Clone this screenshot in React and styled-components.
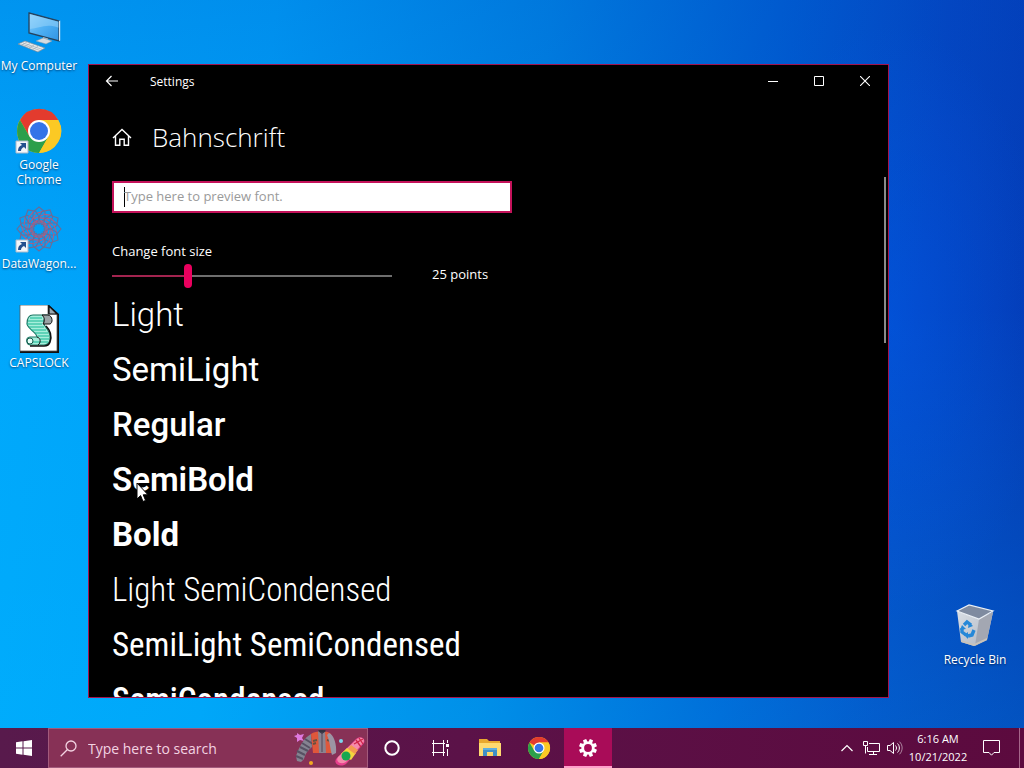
import React, { useState } from "react";
import styled, { createGlobalStyle } from "styled-components";

const ui = '"Open Sans", "Noto Sans", sans-serif';
const preview = 'Roboto, "Open Sans", sans-serif';
const previewCondensed = '"Roboto Condensed", Roboto, sans-serif';

const GlobalStyle = createGlobalStyle`
  *, *::before, *::after { box-sizing: border-box; }
  body { margin: 0; font-family: ${ui}; color: #fff; overflow: hidden; }
  button { border: 0; padding: 0; background: none; color: inherit; font: inherit; }
  svg { display: block; flex: none; }
`;

const Screen = styled.div`
  display: flex;
  flex-direction: column;
  height: 100vh;
  background:
    radial-gradient(ellipse 160px 300px at 87% 42%, rgba(0, 92, 240, 0.4), transparent),
    linear-gradient(180deg, rgba(0, 70, 190, 0.2), transparent 40%, rgba(0, 200, 255, 0.2)),
    linear-gradient(96deg, #00a8fc 0%, #00a0f8 25%, #0084e4 50%, #005dd2 72%, #0446c2 86%, #0338b2 100%);
`;

const Desktop = styled.main`
  flex: 1;
  min-height: 0;
  display: grid;
  grid-template-columns: 88px minmax(0, 1fr) 135px;
`;

const IconColumn = styled.div`
  display: flex;
  flex-direction: column;
  justify-content: ${(p) => (p.$end ? "flex-end" : "flex-start")};
  align-items: ${(p) => (p.$end ? "flex-end" : "flex-start")};
  padding: ${(p) => (p.$end ? "0 0 27px" : "8px 0 0")};
`;

const Shortcut = styled.button`
  width: ${(p) => p.$width || 78}px;
  height: 99px;
  display: flex;
  flex-direction: column;
  align-items: center;
  gap: 2px;
  font-size: 12px;
  line-height: 15px;
  white-space: nowrap;
  text-shadow: 0 1px 2px rgba(0, 20, 60, 0.7);
`;

const Window = styled.section`
  margin: 64px 0 30px;
  min-height: 0;
  display: flex;
  flex-direction: column;
  background: #000;
  border: 1px solid #a3134f;
  overflow: hidden;
`;

const TitleBar = styled.header`
  display: flex;
  align-items: center;
  height: 32px;
  flex: none;
  font-size: 12px;
`;

const TitleButton = styled.button`
  width: 46px;
  height: 32px;
  display: grid;
  place-items: center;
`;

const WindowName = styled.span`
  flex: 1;
  padding-left: 15px;
`;

const PageHeader = styled.div`
  display: flex;
  align-items: center;
  gap: 20px;
  height: 80px;
  flex: none;
  padding-left: 23px;
`;

const PageTitle = styled.h1`
  margin: 0;
  font-size: 26px;
  font-weight: 300;
  line-height: 36px;
`;

const Body = styled.div`
  flex: 1;
  min-height: 0;
  display: flex;
`;

const Content = styled.div`
  flex: 1;
  min-width: 0;
  overflow: hidden;
  padding: 4px 23px 0;
`;

const ScrollThumb = styled.div`
  width: 2px;
  height: 32%;
  margin-right: 2px;
  background: #8a8a8a;
`;

const PreviewInput = styled.input`
  display: block;
  width: 100%;
  max-width: 400px;
  height: 32px;
  padding: 0 10px 2px;
  border: 2px solid #c4125a;
  border-radius: 0;
  outline: 0;
  background: linear-gradient(#000, #000) 10px center / 1px 20px no-repeat #fff;
  color: #000;
  font: 13px ${ui};
  &::placeholder { color: #9a9a9a; opacity: 1; }
`;

const SizeLabel = styled.label`
  display: block;
  margin-top: 28px;
  font-size: 13px;
  line-height: 20px;
`;

const SliderRow = styled.div`
  display: flex;
  align-items: center;
  gap: 40px;
  height: 24px;
  margin: 3px 0 1px;
  font-size: 13px;
`;

const Slider = styled.input`
  appearance: none;
  width: 280px;
  height: 24px;
  margin: 0;
  background: linear-gradient(90deg, #a3244f 27%, #6e6e6e 27%) center / 100% 2px no-repeat;
  &::-webkit-slider-thumb {
    appearance: none;
    width: 8px;
    height: 24px;
    border-radius: 4px;
    background: #ea005e;
  }
`;

const SizeValue = styled.output`
  line-height: 20px;
  padding-bottom: 4px;
`;

const FaceList = styled.ul`
  margin: 0;
  padding: 0;
  list-style: none;
  display: flex;
  flex-direction: column;
  gap: 4px;
  font-family: ${preview};
`;

const Face = styled.li`
  font-size: 33px;
  line-height: 51px;
  font-family: ${(p) => (p.$condensed ? previewCondensed : preview)};
  font-weight: ${(p) => p.$weight};
  white-space: nowrap;
`;

const Pointer = styled.svg`
  position: absolute;
  left: 136px;
  top: 482px;
  pointer-events: none;
`;

const Taskbar = styled.footer`
  display: flex;
  height: 40px;
  flex: none;
  background: linear-gradient(90deg, #581a4c, #5b1248 45%, #5c0a3e);
`;

const StartButton = styled.button`
  width: 48px;
  display: grid;
  place-items: center;
`;

const SearchBox = styled.label`
  width: 320px;
  display: flex;
  align-items: center;
  gap: 11px;
  padding: 0 2px 0 11px;
  background: #873156;
  border: 1px solid #a35a7c;
`;

const SearchInput = styled.input`
  flex: 1;
  min-width: 0;
  border: 0;
  padding: 0;
  outline: 0;
  background: none;
  color: #f3d3e2;
  font: 14px ${ui};
  &::placeholder { color: #f3d3e2; opacity: 1; }
`;

const Apps = styled.nav`
  display: flex;
  gap: 1px;
  flex: 1;
`;

const AppButton = styled.button`
  width: 48px;
  display: grid;
  place-items: center;
  background: ${(p) => (p.$active ? "#a90c58" : "none")};
  box-shadow: ${(p) => (p.$active ? "inset 0 -2px #ff9fcb" : "none")};
`;

const Tray = styled.div`
  display: flex;
`;

const TrayButton = styled.button`
  width: ${(p) => p.$width || 24}px;
  display: grid;
  place-items: center;
`;

const Clock = styled.time`
  width: 62px;
  padding-top: 2px;
  font-size: 11px;
  line-height: 18px;
  text-align: center;
  white-space: nowrap;
`;

const ShowDesktop = styled.button`
  width: 5px;
  margin-left: 6px;
  border-left: 1px solid #a5668a;
`;

const ChromeLogo = ({ size }) => (
  <svg width={size} height={size} viewBox="0 0 48 48">
    <circle cx="24" cy="24" r="22" fill="#fbc924" />
    <path d="M24 24 4.900 13A22 22 0 0 1 43.100 13H24z" fill="#e33b2e" />
    <path d="M4.900 13A22 22 0 0 0 24 46L33.500 29.500 24 24 14.500 29.500z" fill="#2c9f4b" />
    <path d="M43.100 13A22 22 0 0 1 24 46L33.500 29.500 24 13z" fill="#fbc924" />
    <circle cx="24" cy="24" r="11" fill="#fff" />
    <circle cx="24" cy="24" r="8.700" fill="#3474e8" />
  </svg>
);

const ShortcutBadge = () => (
  <g>
    <path d="M1 34h12v12H1z" fill="#f3f6fa" stroke="#a9b8c8" />
    <path d="M5 36h6v6l-2-2c-2 1-3 2-3 4H3c0-3 1-5 4-6z" fill="#24508e" />
  </g>
);

const ComputerIcon = () => (
  <svg width="48" height="48" viewBox="0 0 48 48">
    <defs>
      <linearGradient id="glass" x1="0" y1="0" x2="1" y2="1">
        <stop offset="0" stopColor="#8bd0fb" />
        <stop offset="0.500" stopColor="#4fb0f3" />
        <stop offset="1" stopColor="#2f94e4" />
      </linearGradient>
    </defs>
    <path d="m14 5 30 8v20L14 25z" fill="url(#glass)" stroke="#26435e" strokeWidth="1.300" />
    <path d="m15 6 28.500 7.700v6C32 15 24 20 15 21z" fill="#a9dcfb" opacity="0.450" />
    <path d="m44 13 1.200-.6v20L44 33z" fill="#d6e6ef" />
    <path d="m28 29 5 1.500v3l-5 0z" fill="#aebcc6" />
    <path d="m21 33 7-3 9 3-6 3z" fill="#d5dce1" stroke="#8597a5" strokeWidth="0.500" />
    <path d="m3 36 7-3 20 7-7 4z" fill="#e8ebec" stroke="#76899a" strokeWidth="0.700" />
    <path d="m6 36 19 6.500M8 35l19 6.300M10 38.500l5-3M14 40l5-3M18 41.400l5-3M7 37l5-3" stroke="#9fadb8" strokeWidth="0.700" fill="none" />
  </svg>
);

const DesktopChromeIcon = () => (
  <svg width="48" height="48" viewBox="0 0 48 48">
    <g transform="translate(1 1)">
      <circle cx="23" cy="23" r="22" fill="#fbc924" />
      <path d="M23 12H42.300A22 22 0 0 0 4 12L13.500 28.500z" fill="#e33b2e" />
      <path d="M4 12A22 22 0 0 0 23 45L32.500 28.500 13.500 28.500z" fill="#2c9f4b" />
      <path d="M42.300 12A22 22 0 0 1 23 45L32.500 28.500 23 12z" fill="#fbc924" />
      <circle cx="23" cy="23" r="11" fill="#fff" />
      <circle cx="23" cy="23" r="9" fill="#3474e8" />
    </g>
    <ShortcutBadge />
  </svg>
);

const MeshIcon = () => (
  <svg width="48" height="48" viewBox="0 0 48 48">
    <g fill="none" stroke="#7d6488" strokeWidth="1.100" opacity="0.850">
      {[0, 30, 60, 90, 120, 150, 180, 210, 240, 270, 300, 330].map((a) => (
        <g key={a} transform={`rotate(${a} 24 23)`}>
          <path d="m24 18-6-5V6l6-5 6 5v7z" />
          <path d="m20 8 8-3M19 13l9-4M21 15h6" stroke="#d3506c" />
        </g>
      ))}
      <circle cx="24" cy="23" r="7" stroke="#b05a78" />
    </g>
    <ShortcutBadge />
  </svg>
);

const ScriptIcon = () => (
  <svg width="48" height="48" viewBox="0 0 48 48">
    <path d="M5 0h29l10 9v39H5z" fill="#111" />
    <path d="M5 0h28v9h9v37H5z" fill="#fff" stroke="#555" strokeWidth="0.800" />
    <path d="M34 1v8h8z" fill="#9ba7ae" stroke="#111" strokeWidth="1.200" />
    <path d="M18 10h14c-4 3-4 8-2 11 3 4 6 8 5 14-1 4-3 5-6 5H16c-5 0-6-8-1-8h7c0-4-9-8-10-13 0-5 2-9 6-9z" fill="#a6eedb" stroke="#1c7663" strokeWidth="1.200" />
    <path d="M27 10h6c5 1 5 8 2 9h-7c2-3 2-6-1-9z" fill="#9aa3a5" stroke="#111" />
    <path d="M15 13h12M13 16h15M12 19h15M14 22h15M16 25h15M20 28h13M23 31h11M25 34h9M14 37h19" stroke="#17b794" strokeWidth="1" fill="none" />
    <path d="M31 21c5 5 6 10 4 16-1 3-3 4-6 4H15" fill="none" stroke="#111" strokeWidth="1.600" />
    <circle cx="15" cy="36" r="3" fill="#e5fff8" stroke="#155b4d" />
    <path d="M22 32c4 1 4 6 1 8" stroke="#111" fill="none" />
  </svg>
);

const BinIcon = () => (
  <svg width="48" height="48" viewBox="0 0 48 48">
    <defs>
      <linearGradient id="bin" x1="0" y1="0" x2="1" y2="1">
        <stop offset="0" stopColor="#d9dfe6" />
        <stop offset="1" stopColor="#aeb4bf" />
      </linearGradient>
    </defs>
    <path d="m6 9 4 31 13 4 13-6 6-28-14 7z" fill="url(#bin)" />
    <path d="m28 17 14-7-6 28-12 6z" fill="#a3a7b2" />
    <path d="m6 9 12-6 24 6-14 8z" fill="#7f8ba0" stroke="#edf1f5" strokeWidth="1.200" />
    <path d="m10 38 13 4 13-6v2l-13 6-13-4z" fill="#c9c3ba" />
    <g fill="none" stroke="#2588d8" strokeWidth="3.400">
      <path d="m13 23 3-3 4 3" />
      <path d="m11 26 0 4 4 3" />
      <path d="m17 34 4-1 2-5" />
    </g>
    <path d="m18 20 4 4-5 2zM17 30v7l-4-4zM9 28l2-5 4 4z" fill="#2588d8" />
  </svg>
);

const HomeIcon = () => (
  <svg width="20" height="20" viewBox="0 0 20 20" fill="none" stroke="#fff" strokeWidth="1.400">
    <path d="m1 11 9-8.500L19 11M3.500 9v9.300h4.300v-6h4.400v6h4.300V9" />
  </svg>
);

const CollageArt = () => (
  <svg width="72" height="38" viewBox="0 0 72 38">
    <path d="m4 4 3 2 4-1-2 4 2 3-4-1-3 2 0-4-3-2 3-1z" fill="#df79df" />
    <path d="M18 5C11 9 7 16 3 27l1 5 4 1 3-3c1-5 4-9 8-12z" fill="#858391" />
    <path d="m12 10 8 5M9 14l8 5M7 18l8 4M4 22l8 4M3 27l7 3" stroke="#575163" strokeWidth="2" />
    <path d="M18 5c4-3 16-4 20 0l2 19H20z" fill="#df573b" />
    <path d="M25 2h7l1 22h-7z" fill="#8c8390" />
    <path d="m25 2 4 3 4-3-1-1h-6z" fill="#333241" />
    <path d="m20 12 4-1M34 11l4 1M20 15l3-1" stroke="#69503f" strokeWidth="2" />
    <path d="M36 4c5 2 8 12 7 20l-4 2c-2-7-2-13-5-20z" fill="#9c95a4" />
    <path d="M29 3v20" stroke="#514758" />
    <circle cx="48" cy="12" r="2" fill="#7cd5ed" />
    <circle cx="18" cy="34" r="2" fill="#f3a921" />
    <path d="m43 30 20-20c4-4 10-1 8 4L54 34c-5 5-14 2-11-4z" fill="#e83f8e" />
    <path d="m45 28 19-18c4-3 9 0 6 4L53 33c-5 3-11 0-8-5z" fill="#f58aac" />
    <path d="m54 19 9 5-5 7-10-6z" fill="#f4d53e" />
    <path d="m58 16 7 5-3 4-7-5z" fill="#f39a4e" />
    <circle cx="53" cy="27" r="4.500" fill="#16a750" />
    <path d="m63 11 5 7M66 9l4 6M61 15l9-5" stroke="#ce2449" strokeWidth="1.300" />
  </svg>
);

const FolderIcon = () => (
  <svg width="22" height="20" viewBox="0 0 22 20">
    <path d="M0 1h8l2 2h11v15H0z" fill="#e9a92f" />
    <path d="M0 5h22v13H0z" fill="#ffda70" />
    <path d="M4 10h14v8h-4v-4H8v4H4z" fill="#3f8fc6" />
    <path d="M4 10h14v2H4z" fill="#5eaede" />
    <path d="M8 15h6v3H8z" fill="#fbd565" />
  </svg>
);

const GearIcon = () => (
  <svg width="20" height="20" viewBox="0 0 20 20">
    <g fill="#fff">
      {[0, 45, 90, 135, 180, 225, 270, 315].map((a) => (
        <path key={a} d="M8 4.500 8.300 1h3.400l.3 3.500z" transform={`rotate(${a + 22.5} 10 10)`} />
      ))}
    </g>
    <circle cx="10" cy="10" r="5.200" fill="none" stroke="#fff" strokeWidth="2.600" />
  </svg>
);

const faces = [
  { name: "Light", weight: 300 },
  { name: "SemiLight", weight: 400 },
  { name: "Regular", weight: 500 },
  { name: "SemiBold", weight: 600 },
  { name: "Bold", weight: 700 },
  { name: "Light SemiCondensed", weight: 300, condensed: true },
  { name: "SemiLight SemiCondensed", weight: 400, condensed: true },
  { name: "SemiCondensed", weight: 500, condensed: true },
];

export default function App() {
  const [points, setPoints] = useState(25);
  return (
    <Screen>
      <GlobalStyle />
      <Desktop>
        <IconColumn>
          <Shortcut><ComputerIcon />My Computer</Shortcut>
          <Shortcut><DesktopChromeIcon /><span>Google<br />Chrome</span></Shortcut>
          <Shortcut><MeshIcon />DataWagon...</Shortcut>
          <Shortcut><ScriptIcon />CAPSLOCK</Shortcut>
        </IconColumn>

        <Window>
          <TitleBar>
            <TitleButton aria-label="Back">
              <svg width="14" height="12" viewBox="0 0 14 12" fill="none" stroke="#fff" strokeWidth="1.200">
                <path d="M13 6H1.500M6.500 1l-5 5 5 5" />
              </svg>
            </TitleButton>
            <WindowName>Settings</WindowName>
            <TitleButton aria-label="Minimize">
              <svg width="10" height="10"><path d="M0 5h10v1H0z" fill="#fff" /></svg>
            </TitleButton>
            <TitleButton aria-label="Maximize">
              <svg width="10" height="10"><path d="M.5.5h9v9h-9z" fill="none" stroke="#fff" /></svg>
            </TitleButton>
            <TitleButton aria-label="Close">
              <svg width="10" height="10"><path d="m0 0 10 10M10 0 0 10" stroke="#fff" strokeWidth="1.100" /></svg>
            </TitleButton>
          </TitleBar>
          <PageHeader>
            <HomeIcon />
            <PageTitle>Bahnschrift</PageTitle>
          </PageHeader>
          <Body>
            <Content>
              <PreviewInput aria-label="Preview text" placeholder="Type here to preview font." />
              <SizeLabel htmlFor="size">Change font size</SizeLabel>
              <SliderRow>
                <Slider id="size" type="range" min="8" max="72" value={points} onChange={(e) => setPoints(e.target.value)} />
                <SizeValue htmlFor="size">{points} points</SizeValue>
              </SliderRow>
              <FaceList>
                {faces.map((face) => (
                  <Face key={face.name} $weight={face.weight} $condensed={face.condensed}>{face.name}</Face>
                ))}
              </FaceList>
            </Content>
            <ScrollThumb />
          </Body>
        </Window>

        <IconColumn $end>
          <Shortcut $width={98}><BinIcon /><span>Recycle Bin</span></Shortcut>
        </IconColumn>
      </Desktop>

      <Taskbar>
        <StartButton aria-label="Start">
          <svg width="16" height="16" viewBox="0 0 16 16" fill="#fff">
            <path d="m0 2.200 6.500-.9v6.200H0zM7.500 1.200 16 0v7.500H7.500zM0 8.500h6.500v6.200L0 13.800zM7.500 8.500H16V16l-8.500-1.200z" />
          </svg>
        </StartButton>
        <SearchBox>
          <svg width="17" height="17" viewBox="0 0 17 17" fill="none" stroke="#f3d3e2" strokeWidth="1.300">
            <circle cx="11" cy="6" r="5" /><path d="M7.500 9.500.7 16.300" />
          </svg>
          <SearchInput aria-label="Search" placeholder="Type here to search" />
          <CollageArt />
        </SearchBox>
        <Apps>
          <AppButton aria-label="Cortana">
            <svg width="16" height="16"><circle cx="8" cy="8" r="6.700" fill="none" stroke="#fff" strokeWidth="2" /></svg>
          </AppButton>
          <AppButton aria-label="Task View">
            <svg width="18" height="16" fill="none" stroke="#fff">
              <path d="M1.500 0v3.500h10V0M1.500 16v-3.500h10V16M1.500 3.500v9M11.500 3.500v9M0 3.500h13M0 12.500h13M15.500 0v3M15.500 9v7" />
              <path d="M14 4h3v3h-3z" fill="#fff" stroke="none" />
            </svg>
          </AppButton>
          <AppButton aria-label="File Explorer"><FolderIcon /></AppButton>
          <AppButton aria-label="Chrome"><ChromeLogo size={24} /></AppButton>
          <AppButton aria-label="Settings" $active><GearIcon /></AppButton>
        </Apps>
        <Tray>
          <TrayButton aria-label="Show hidden icons">
            <svg width="12" height="8" fill="none" stroke="#fff" strokeWidth="1.200"><path d="m.5 7 5.500-5.500L11.500 7" /></svg>
          </TrayButton>
          <TrayButton aria-label="Network">
            <svg width="17" height="14" fill="none" stroke="#fff">
              <path d="M6 2.500h10.500v8H4.500V6M10.500 10.500v3M6 13.500h8M.5.5h4v4h-4zM2.500 4.500v8" />
            </svg>
          </TrayButton>
          <TrayButton aria-label="Volume">
            <svg width="16" height="14" fill="none" stroke="#fff">
              <path d="M.5 4.500h2.500l3.500-3v11L3 9.500H.5zM8.500 4.500c1.300 1.500 1.300 3.500 0 5M10.500 2.500c2.500 2.500 2.500 6.500 0 9" />
              <path d="M12.500.7c3.500 3.500 3.500 9 0 12.600" opacity="0.500" />
            </svg>
          </TrayButton>
          <Clock>6:16 AM<br />10/21/2022</Clock>
          <TrayButton $width={44} aria-label="Notifications">
            <svg width="17" height="16" fill="none" stroke="#fff"><path d="M.5.5h16v12H11l-2.500 2.700L6 12.500H.5z" /></svg>
          </TrayButton>
          <ShowDesktop aria-label="Show desktop" />
        </Tray>
      </Taskbar>

      <Pointer width="13" height="21" viewBox="0 0 13 21">
        <path d="M1 1v16l3.600-3.400L7 19.500l2.600-1.100-2.400-5.600H12z" fill="#fff" stroke="#000" />
      </Pointer>
    </Screen>
  );
}
